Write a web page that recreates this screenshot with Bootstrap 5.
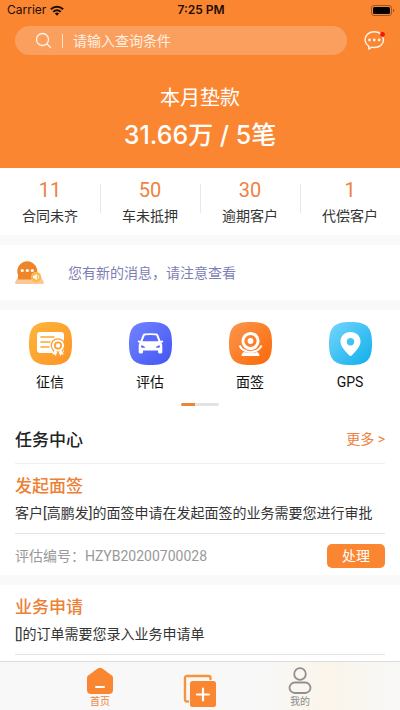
<!DOCTYPE html>
<html lang="zh-CN">
<head>
<meta charset="utf-8">
<meta name="viewport" content="width=device-width, initial-scale=1">
<title>任务中心</title>
<link rel="stylesheet" href="https://cdn.jsdelivr.net/npm/bootstrap@5.3.0/dist/css/bootstrap.min.css">
<style>
  :root { --brand: #fb8632; --brand-text: #ee8240; --strip: #f9f9f9; }
  body { font-family: Roboto, "Noto Sans CJK SC", sans-serif; font-size: 14px; line-height: 20px; color: #333; background: #fff; overflow-x: hidden; padding-bottom: 48px; }
  svg { display: block; flex: none; }
  a { color: inherit; text-decoration: none; }
  .side { padding-left: 15px; padding-right: 15px; }
  .hero { background: var(--brand); height: 168px; font-family: Inter, "Noto Sans CJK SC", sans-serif; }
  .status-bar { display: grid; grid-template-columns: 1fr auto 1fr; height: 20px; padding: 0 5px 0 7px; font-size: 12px; color: #1c0d02; }
  .search-row { margin-top: 6px; gap: 17px; padding-right: 15px; }
  .search-box { background: #fb9f5e; height: 29px; padding: 0 20px; color: #fff2e6; }
  .search-box i { width: 1px; height: 14px; background: #ffe3cd; margin: 0 10px; }
  .search-box input { background: none; border: 0; outline: 0; padding: 0; min-width: 0; color: #fff; }
  .search-box input::placeholder { color: #fff0e2; opacity: 1; }
  .hero-title { font-size: 20px; line-height: 24px; margin-top: 31px; font-weight: 400; }
  .hero-sum { font-size: 25px; line-height: 32px; margin-top: 9px; font-weight: 500; }
  .stats { height: 67px; padding-top: 11px; }
  .stats a { position: relative; }
  .stats strong { font-size: 20px; line-height: 22px; font-weight: 400; color: var(--brand-text); margin-bottom: 5px; }
  .stats a + a::before { content: ""; position: absolute; left: 0; top: 5px; width: 1px; height: 29px; background: #e8e8e8; }
  .strip { height: 10px; background: var(--strip); }
  .notice { height: 55px; gap: 24px; color: #7e80b5; }
  .tiles { padding-top: 12px; color: #111; }
  .tiles a { gap: 7px; }
  .dots { width: 38px; height: 3px; background: #e3e3e3; margin: 11px auto 0; }
  .dots span { display: block; width: 14px; height: 3px; background: #ee8436; }
  .section-title { font-size: 17px; line-height: 24px; font-weight: 500; color: #222; margin: 0; }
  .task-head { height: 46px; margin-top: 12px; padding-top: 10px; border-bottom: 1px solid #efefef; }
  .more { color: var(--brand-text); padding-top: 1px; }
  .task-body { padding-top: 10px; padding-bottom: 10px; border-bottom: 1px solid #e4e4e4; }
  .task-name { font-size: 17px; line-height: 24px; font-weight: 500; color: #ee8036; margin: 0 0 5px; }
  .task-body p { white-space: nowrap; }
  .task-foot { height: 41px; color: #999; padding-top: 2px; }
  .btn-handle { --bs-btn-color: #fff; --bs-btn-bg: var(--brand); --bs-btn-hover-color: #fff; --bs-btn-hover-bg: #ec7724; --bs-btn-border-width: 0; width: 58px; height: 24px; padding: 0; font-size: 14px; line-height: 24px; border-radius: 5px; }
  .tab-bar { height: 49px; padding: 0 12.5%; background: linear-gradient(90deg, #f8f8f8 65%, #fbf5ea 82%, #f8f8f7); border-top: 1px solid #dcdcdc; font-size: 10px; line-height: 14px; color: #8b8b8b; }
  .tab-bar a { padding-top: 5px; }
  .tab-bar .tab-add { padding-top: 12px; }
  .tab-bar .active { color: var(--brand-text); }
</style>
<script src="https://cdn.jsdelivr.net/npm/bootstrap@5.3.0/dist/js/bootstrap.bundle.min.js"></script>
</head>
<body>
<header class="hero">
  <div class="status-bar align-items-center">
    <div class="d-flex align-items-center gap-1"><span>Carrier</span>
      <svg width="14" height="11" viewBox="0 0 16 12" fill="none" stroke="#1c0d02" stroke-width="2.200"><path d="M1 4.600a9.800 9.800 0 0 1 14 0M3.700 7.500a6 6 0 0 1 8.600 0"/><path d="M8 12 5.500 9.500a3.500 3.500 0 0 1 5 0z" fill="#1c0d02" stroke="none"/></svg>
    </div>
    <span class="fw-semibold">7:25 PM</span>
    <svg class="ms-auto" width="24" height="11" viewBox="0 0 24 11"><rect x=".5" y=".5" width="20" height="10" rx="2.500" fill="none" stroke="#9c5523"/><rect x="2" y="2" width="17" height="7" rx="1.500" fill="#000"/><path d="M22 3.700c1.800.6 1.800 3 0 3.600z" fill="#9c5523"/></svg>
  </div>
  <div class="search-row d-flex align-items-center side">
    <label class="search-box d-flex align-items-center flex-grow-1 rounded-pill">
      <svg width="17" height="17" viewBox="0 0 17 17" fill="none" stroke="currentColor" stroke-width="1.300" stroke-linecap="round"><circle cx="7.500" cy="7.500" r="6"/><path d="m12 12 3.500 3.500"/></svg>
      <i></i>
      <input class="flex-grow-1" type="search" placeholder="请输入查询条件" aria-label="请输入查询条件">
    </label>
    <a href="#" aria-label="消息"><svg width="21" height="21" viewBox="0 0 21 21"><path d="M4.800 19.200v-3.100A8.200 8.200 0 0 1 1 9.800C1 5.300 5 1.800 10.300 1.800s9.200 3.500 9.200 8-4 7.700-9.200 7.700c-1 0-1.900-.1-2.600-.3z" fill="none" stroke="#fff4e8" stroke-width="1.400" stroke-linejoin="round"/><g fill="#fff4e8"><circle cx="5.500" cy="10" r="1.400"/><circle cx="10.300" cy="10" r="1.400"/><circle cx="15.100" cy="10" r="1.400"/></g><circle cx="18.500" cy="4.500" r="2.400" fill="#f21508"/></svg></a>
  </div>
  <div class="text-center text-white">
    <div class="hero-title">本月垫款</div>
    <div class="hero-sum">31.66万 / 5笔</div>
  </div>
</header>
<main>
  <nav class="stats row g-0 text-center" aria-label="统计">
    <a class="col d-flex flex-column" href="#"><strong>11</strong>合同未齐</a>
    <a class="col d-flex flex-column" href="#"><strong>50</strong>车未抵押</a>
    <a class="col d-flex flex-column" href="#"><strong>30</strong>逾期客户</a>
    <a class="col d-flex flex-column" href="#"><strong>1</strong>代偿客户</a>
  </nav>
  <div class="strip"></div>
  <a class="notice side d-flex align-items-center" href="#">
    <svg width="29" height="26" viewBox="0 0 29 26"><path d="M4 15h21l3.800 7c.4 1.300-.2 2-1.300 2h-26C.3 24-.2 23.200.2 22z" fill="#fbc795"/><path d="M3 19.500V15A10 10 0 1 1 21.500 15v4.500z" fill="#ee8528"/><g fill="#fff"><circle cx="7.300" cy="10.500" r="1.600"/><circle cx="12.300" cy="10.500" r="1.600"/><circle cx="17.300" cy="10.500" r="1.600"/></g><circle cx="21" cy="17" r="5.200" fill="#fdb849"/><path d="M18 15.700h1.500l2.300-2v6.600l-2.300-2H18z" fill="#fff"/><path d="M23 15.200q1.300 1.800 0 3.600" fill="none" stroke="#fff" stroke-width=".8"/></svg>
    <span>您有新的消息，请注意查看</span>
  </a>
  <div class="strip"></div>
  <nav class="tiles row g-0" aria-label="功能">
    <a class="col d-flex flex-column align-items-center" href="#">
      <svg width="43" height="43" viewBox="0 0 43 43"><defs><linearGradient id="g1" x2="1" y2="1"><stop stop-color="#ffb63c"/><stop offset="1" stop-color="#fb9326"/></linearGradient></defs><path d="M21.500 0C38 0 43 5 43 21.500S38 43 21.500 43 0 38 0 21.500 5 0 21.500 0z" fill="url(#g1)"/><rect x="8" y="10" width="27" height="21" rx="3" fill="#fff"/><path d="M12 15h13M12 20h9M12 25h8" stroke="#fda634" stroke-width="1.600" stroke-linecap="round"/><circle cx="29" cy="23.500" r="7.300" fill="#fda030"/><path d="M24 27h10v8H24z" fill="#fda030"/><path d="m25.500 28-2.300 4.500 2.300-.2 1.200 1.700 1.600-4M32.500 28l2.300 4.500-2.300-.2-1.200 1.700-1.600-4" fill="#fff"/><circle cx="29" cy="23.500" r="6" fill="#fff"/><circle cx="29" cy="23.500" r="4" fill="#fda030"/><circle cx="29" cy="23.500" r="2.200" fill="#fff"/></svg>
      征信</a>
    <a class="col d-flex flex-column align-items-center" href="#">
      <svg width="43" height="43" viewBox="0 0 43 43"><defs><linearGradient id="g2" x2="1" y2="1"><stop stop-color="#7284ff"/><stop offset="1" stop-color="#4355f2"/></linearGradient></defs><path d="M21.500 0C38 0 43 5 43 21.500S38 43 21.500 43 0 38 0 21.500 5 0 21.500 0z" fill="url(#g2)"/><path d="M13.700 13c.5-1 1.300-1.300 2.300-1.400q5.500-.5 11 0c1 .1 1.800.4 2.300 1.400l2.300 6 1.400-.5c1.500-.2 1.700 1.500.3 1.900l-1 .4c.8 1 1 2 1 3.200v6c0 2-4.300 2-4.300 0v-1.500H14V30c0 2-4.300 2-4.300 0v-6c0-1.200.2-2.200 1-3.200l-1-.4c-1.400-.4-1.200-2.100.3-1.900l1.400.5z" fill="#fff"/><path d="M15.500 14c.2-.6.5-.8 1-.8q5-.5 10 0c.5 0 .8.200 1 .8l2 5.300h-16zM12 23.500c2 0 3.500.6 4.300 2.200h-3.500c-.8-.5-1-1-.8-2.200zM31 23.500c-2 0-3.500.6-4.300 2.200h3.500c.8-.5 1-1 .8-2.200z" fill="#596bfa"/></svg>
      评估</a>
    <a class="col d-flex flex-column align-items-center" href="#">
      <svg width="43" height="43" viewBox="0 0 43 43"><defs><linearGradient id="g3" x2="1" y2="1"><stop stop-color="#fd964d"/><stop offset="1" stop-color="#fa6907"/></linearGradient></defs><path d="M21.500 0C38 0 43 5 43 21.500S38 43 21.500 43 0 38 0 21.500 5 0 21.500 0z" fill="url(#g3)"/><g fill="none" stroke="#fff"><circle cx="21.500" cy="19" r="7.600" stroke-width="3"/><path d="M10.500 23.500c4 8.500 18 8.500 22 0" stroke-width="2"/></g><circle cx="21.500" cy="19" r="2.900" fill="#fff"/><path d="M15 30q6.500 2 13 0c2 1 2.500 2 2.300 4H12.700c-.2-2 .3-3 2.300-4z" fill="#fff"/></svg>
      面签</a>
    <a class="col d-flex flex-column align-items-center" href="#">
      <svg width="43" height="43" viewBox="0 0 43 43"><defs><linearGradient id="g4" x2="1" y2="1"><stop stop-color="#74d6fc"/><stop offset="1" stop-color="#0eaeec"/></linearGradient></defs><path d="M21.500 0C38 0 43 5 43 21.500S38 43 21.500 43 0 38 0 21.500 5 0 21.500 0z" fill="url(#g4)"/><path fill-rule="evenodd" d="M21.500 10c-5.800 0-10 4-10 9.500 0 4.500 3.500 8.500 8.600 13.700.9.900 1.900.9 2.800 0 5.100-5.200 8.600-9.200 8.600-13.700 0-5.500-4.200-9.500-10-9.500zm0 6a3.700 3.700 0 1 1 0 7.400 3.700 3.700 0 0 1 0-7.400z" fill="#fff"/></svg>
      GPS</a>
  </nav>
  <div class="dots rounded-pill overflow-hidden"><span></span></div>

  <section>
    <div class="side"><div class="task-head d-flex justify-content-between">
      <h2 class="section-title">任务中心</h2>
      <a class="more" href="#">更多 &gt;</a>
    </div></div>
    <article class="side">
      <div class="task-body"><h3 class="task-name">发起面签</h3>
        <p class="m-0">客户[高鹏发]的面签申请在发起面签的业务需要您进行审批</p></div>
      <div class="task-foot d-flex justify-content-between align-items-center">
        <span>评估编号：HZYB20200700028</span>
        <button class="btn btn-handle" type="button">处理</button>
      </div>
    </article>
    <div class="strip"></div>
    <article class="side">
      <div class="task-body"><h3 class="task-name">业务申请</h3>
        <p class="m-0">[]的订单需要您录入业务申请单</p></div>
    </article>
  </section>
</main>
<nav class="tab-bar fixed-bottom d-flex" aria-label="主导航">
  <a class="col d-flex flex-column align-items-center active" href="#" aria-current="page">
    <svg width="26" height="28" viewBox="0 0 26 28"><path d="M11 1.300c1.300-.9 2.700-.9 4 0l9.500 7c1 .8 1.500 1.700 1.500 3V23c0 2.700-1.300 4-4 4H4c-2.700 0-4-1.300-4-4V11.300c0-1.300.5-2.200 1.500-3z" fill="#fb8632"/><path d="M9 20h8" stroke="#fff" stroke-width="2" stroke-linecap="round"/></svg>
    首页</a>
  <a class="tab-add col d-flex flex-column align-items-center" href="#" aria-label="新建">
    <svg width="34" height="34" viewBox="0 0 34 34"><path d="M5 27.500H4c-1.300 0-2-.7-2-2V4c0-1.300.7-2 2-2h21.500c1.300 0 2 .7 2 2v1" fill="none" stroke="#f7943b" stroke-width="2.400" stroke-linecap="round"/><rect x="7" y="7" width="26" height="26" rx="2.500" fill="#fb8632"/><path d="M20 14.500v12M14 20.500h12" stroke="#fff" stroke-width="2.200" stroke-linecap="round"/></svg></a>
  <a class="col d-flex flex-column align-items-center" href="#">
    <svg width="24" height="28" viewBox="0 0 24 28" fill="none" stroke="#8f8f8f" stroke-width="1.800"><circle cx="12" cy="7" r="5.800"/><rect x="1.500" y="15.500" width="21" height="10.500" rx="5.250"/></svg>
    我的</a>
</nav>
</body>
</html>
